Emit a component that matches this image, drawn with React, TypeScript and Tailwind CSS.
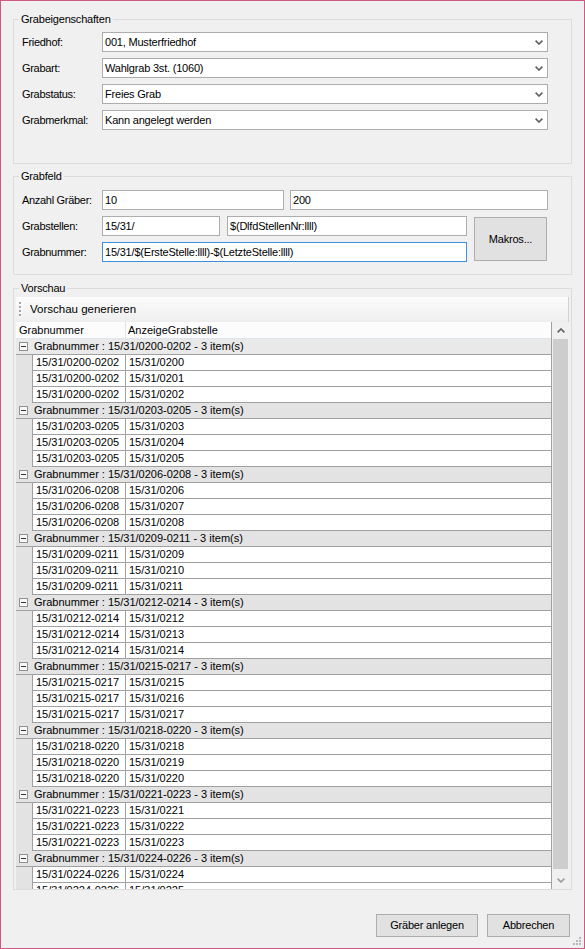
import React from 'react';

const pad = (n: number) => String(n).padStart(4, '0');

// last group only shows two rows before the grid cuts off
const groups = Array.from({ length: 9 }, (_, g) => {
  const start = 200 + g * 3;
  const key = `15/31/${pad(start)}-${pad(start + 2)}`;
  const count = g === 8 ? 2 : 3;
  return { key, items: Array.from({ length: count }, (_, i) => `15/31/${pad(start + i)}`) };
});

function Chevron({ up = false, color = '#606060' }: { up?: boolean; color?: string }) {
  return (
    <svg width="8" height="5" viewBox="0 0 8 5" className="block">
      <path
        d={up ? 'M0.6 4.4 L4 1 L7.4 4.4' : 'M0.6 0.6 L4 4 L7.4 0.6'}
        fill="none"
        stroke={color}
        strokeWidth="1.6"
      />
    </svg>
  );
}

function Combo({ value }: { value: string }) {
  return (
    <div className="flex h-[20px] w-[446px] items-center justify-between border border-[#adadad] bg-white pl-[2px] pr-[4px]">
      <span className="text-[11px] tracking-[-0.2px] text-black">{value}</span>
      <Chevron />
    </div>
  );
}

function Field({ value, w, focus = false }: { value: string; w: string; focus?: boolean }) {
  return (
    <div
      className={`flex h-[20px] items-center border bg-white pl-[2px] ${w} ${
        focus ? 'border-[#3c8fdd]' : 'border-[#adadad]'
      }`}
    >
      <span className="whitespace-nowrap text-[11px] tracking-[-0.2px] text-black">{value}</span>
    </div>
  );
}

function Label({ text }: { text: string }) {
  return <span className="w-[80px] shrink-0 text-[11px] tracking-[-0.3px] text-black">{text}</span>;
}

function Legend({ text, offset }: { text: string; offset: string }) {
  return (
    <legend className={`px-[2px] text-[11px] leading-[14px] tracking-[-0.2px] text-black ${offset}`}>{text}</legend>
  );
}

function CollapseIcon() {
  return (
    <span className="flex h-[9px] w-[9px] items-center justify-center border border-[#919191] bg-[#f7f7f7]">
      <span className="h-px w-[5px] bg-[#333]" />
    </span>
  );
}

function Grip() {
  return (
    <svg width="3" height="18" viewBox="0 0 3 18" className="block">
      {[1, 5, 9, 13].map((y) => (
        <g key={y}>
          <rect x="1" y={y + 1} width="2" height="2" fill="#ffffff" />
          <rect x="0" y={y} width="2" height="2" fill="#a3a3a3" />
        </g>
      ))}
    </svg>
  );
}

export default function App() {
  return (
    <div className="relative box-border flex h-[949px] w-[585px] flex-col border border-[#cd5a83] bg-[#f0f0f0] pt-[11px] font-['Liberation_Sans',Arial,sans-serif] text-black">
      {/* Grabeigenschaften */}
      <fieldset className="ml-[12px] w-[559px] border border-[#dcdcdc] pb-[33px] pl-[8px] pt-[6px]">
        <Legend text="Grabeigenschaften" offset="-ml-[3px]" />
        <div className="flex flex-col gap-[6px]">
          {[
            ['Friedhof:', '001, Musterfriedhof'],
            ['Grabart:', 'Wahlgrab 3st. (1060)'],
            ['Grabstatus:', 'Freies Grab'],
            ['Grabmerkmal:', 'Kann angelegt werden'],
          ].map(([l, v]) => (
            <div key={l} className="flex items-center">
              <Label text={l} />
              <Combo value={v} />
            </div>
          ))}
        </div>
      </fieldset>

      {/* Grabfeld */}
      <fieldset className="ml-[12px] mt-[5px] w-[559px] border border-[#dcdcdc] pb-[12px] pl-[8px] pt-[7px]">
        <Legend text="Grabfeld" offset="-ml-[3px]" />
        <div className="flex items-center">
          <Label text="Anzahl Gräber:" />
          <Field value="10" w="w-[182px]" />
          <div className="ml-[6px]">
            <Field value="200" w="w-[258px]" />
          </div>
        </div>
        <div className="mt-[6px] flex items-center">
          <div className="flex flex-col gap-[6px]">
            <div className="flex items-center">
              <Label text="Grabstellen:" />
              <Field value="15/31/" w="w-[118px]" />
              <div className="ml-[7px]">
                <Field value="$(DlfdStellenNr:llll)" w="w-[240px]" />
              </div>
            </div>
            <div className="flex items-center">
              <Label text="Grabnummer:" />
              <Field value="15/31/$(ErsteStelle:llll)-$(LetzteStelle:llll)" w="w-[365px]" focus />
            </div>
          </div>
          <button className="ml-[7px] flex h-[44px] w-[73px] items-center justify-center border border-[#adadad] bg-[#e1e1e1] text-[11px] tracking-[-0.2px]">
            Makros...
          </button>
        </div>
      </fieldset>

      {/* Vorschau */}
      <fieldset className="ml-[12px] mt-[6px] w-[559px] border border-[#dcdcdc] pl-[2px] pt-[2px]">
        <Legend text="Vorschau" offset="ml-[3px]" />
        <div className="flex h-[25px] w-[553px] items-center border-r border-[#d2d2d2] bg-linear-to-b from-[#fcfcfc] to-[#eeeeee] pl-[3px]">
          <Grip />
          <span className="ml-[8px] text-[11.5px] text-black">Vorschau generieren</span>
        </div>
        <div className="flex h-[567px] w-[553px] overflow-hidden">
          <div className="flex w-[536px] shrink-0 flex-col overflow-hidden border-r border-[#a0a0a0] text-[11px]">
            <div className="flex h-[17px] shrink-0 border-b border-[#dde5ef] bg-[#fcfcfc]">
              <div className="flex w-[110px] items-center border-r border-[#e3e3e3] pl-[3px]">Grabnummer</div>
              <div className="flex items-center pl-[2px]">AnzeigeGrabstelle</div>
            </div>
            {groups.map((g, gi) => (
              <React.Fragment key={g.key}>
                <div
                  className={`flex h-[16px] shrink-0 items-center border-b border-[#a0a0a0] pl-[3px] ${
                    gi === 0 ? 'bg-[#e9e9e9]' : 'bg-[#e3e3e3]'
                  }`}
                >
                  <CollapseIcon />
                  <span className="ml-[6px] whitespace-nowrap">
                    Grabnummer : {g.key} - 3 item(s)
                  </span>
                </div>
                {g.items.map((it) => (
                  <div key={it} className="flex h-[16px] shrink-0">
                    <div className="w-[16px] shrink-0 bg-[#e3e3e3]" />
                    <div className="w-[94px] shrink-0 border-x border-b border-[#a0a0a0] bg-white pl-[3px] leading-[15px]">
                      {g.key}
                    </div>
                    <div className="flex-1 border-b border-[#a0a0a0] bg-white pl-[3px] leading-[15px]">{it}</div>
                  </div>
                ))}
              </React.Fragment>
            ))}
          </div>
          <div className="flex w-[17px] shrink-0 flex-col bg-[#f0f0f0]">
            <div className="flex h-[17px] shrink-0 items-center justify-center">
              <Chevron up />
            </div>
            <div className="mx-[1px] h-[530px] shrink-0 bg-[#cdcdcd]" />
            <div className="flex-1" />
            <div className="flex h-[17px] shrink-0 items-center justify-center">
              <Chevron color="#9a9a9a" />
            </div>
          </div>
        </div>
      </fieldset>

      {/* Buttons */}
      <div className="mt-[24px] flex justify-end gap-[9px] pr-[14px]">
        <button className="h-[23px] w-[102px] border border-[#adadad] bg-[#e1e1e1] text-[11px] tracking-[-0.2px]">
          Gräber anlegen
        </button>
        <button className="h-[23px] w-[83px] border border-[#adadad] bg-[#e1e1e1] text-[11px] tracking-[-0.2px]">
          Abbrechen
        </button>
      </div>

      <svg width="9" height="9" viewBox="0 0 9 9" className="absolute bottom-[2px] right-[2px]">
        {[
          [6, 0],
          [3, 3],
          [6, 3],
          [0, 6],
          [3, 6],
          [6, 6],
        ].map(([x, y]) => (
          <rect key={`${x}-${y}`} x={x} y={y} width="2" height="2" fill="#b9b9b9" />
        ))}
      </svg>
    </div>
  );
}
